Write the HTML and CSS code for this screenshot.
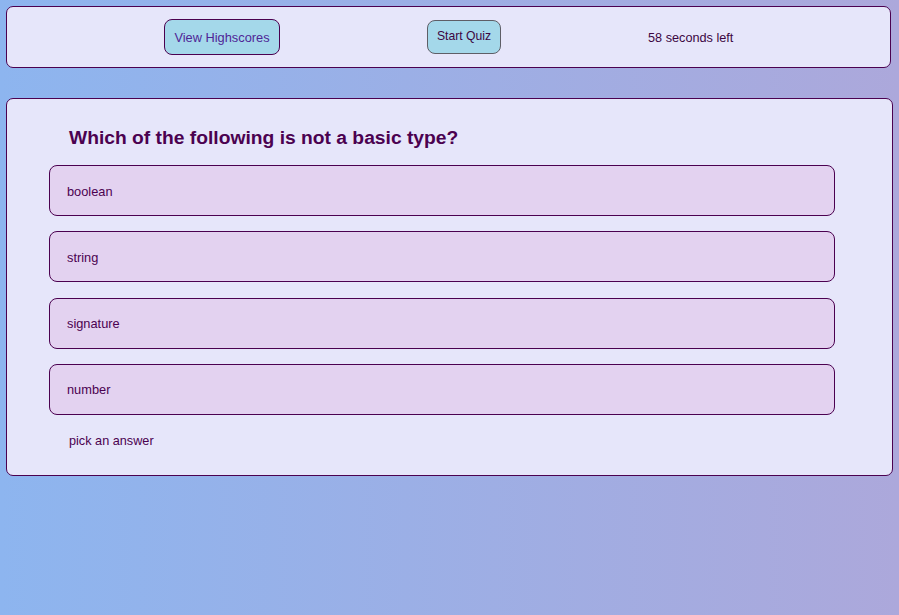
FILE: index.html
```html
<!DOCTYPE html>
<html>
<head>
<meta charset="utf-8">
<link rel="stylesheet" href="styles.css">
</head>
<body>
<header class="topbar">
  <button class="btn btn-scores">View Highscores</button>
  <button class="btn btn-start">Start Quiz</button>
  <span class="timer">58 seconds left</span>
</header>
<main class="card">
  <h1 class="question">Which of the following is not a basic type?</h1>
  <ul class="answers">
    <li class="answer">boolean</li>
    <li class="answer">string</li>
    <li class="answer">signature</li>
    <li class="answer">number</li>
  </ul>
  <p class="status">pick an answer</p>
</main>
</body>
</html>
```

FILE: styles.css
```css
html, body {
  margin: 0;
  padding: 0;
}
body {
  min-height: 615px;
  background: linear-gradient(to right, #8db5ef, #aca8db);
  font-family: "Liberation Sans", Arial, sans-serif;
  color: #4b0150;
  padding-top: 6px;
  box-sizing: border-box;
}
.topbar {
  margin: 0 8px 0 6px;
  height: 60px;
  background: #e6e6fa;
  border: 1px solid #4b0150;
  border-radius: 7px;
  display: flex;
  align-items: center;
  gap: 147px;
  padding-left: 157px;
}
.btn {
  font-family: "Liberation Sans", Arial, sans-serif;
  background: #a4d8ea;
  border-radius: 8px;
  padding: 0;
  margin: 0;
  cursor: pointer;
}
.btn-scores {
  width: 116px;
  height: 36px;
  border: 1px solid #4b0150;
  color: #4f2596;
  font-size: 12.8px;
}
.btn-start {
  width: 74px;
  height: 34px;
  border: 1px solid #5e5e66;
  color: #3c0642;
  font-size: 12.2px;
  padding-bottom: 2px;
}
.timer {
  font-size: 12.7px;
  color: #3c0642;
  padding-top: 1px;
}
.card {
  display: block;
  margin: 30px 6px 0 6px;
  height: 376px;
  background: #e6e6fa;
  border: 1px solid #4b0150;
  border-radius: 7px;
  padding: 0 0 0 42px;
}
.question {
  margin: 0;
  padding: 26px 0 0 20px;
  font-size: 19.25px;
  font-weight: bold;
  line-height: 26px;
  color: #4b0150;
}
.answers {
  list-style: none;
  margin: 14px 0 0 0;
  padding: 0;
  width: 786px;
  display: flex;
  flex-direction: column;
  gap: 15.3px;
}
.answer {
  box-sizing: border-box;
  height: 51px;
  border: 1px solid #4b0150;
  border-radius: 8px;
  background: #e3d2f0;
  font-size: 12.8px;
  padding-left: 17px;
  padding-top: 1px;
  display: flex;
  align-items: center;
}
.status {
  margin: 18px 0 0 20px;
  font-size: 12.7px;
  line-height: 16px;
}
```
